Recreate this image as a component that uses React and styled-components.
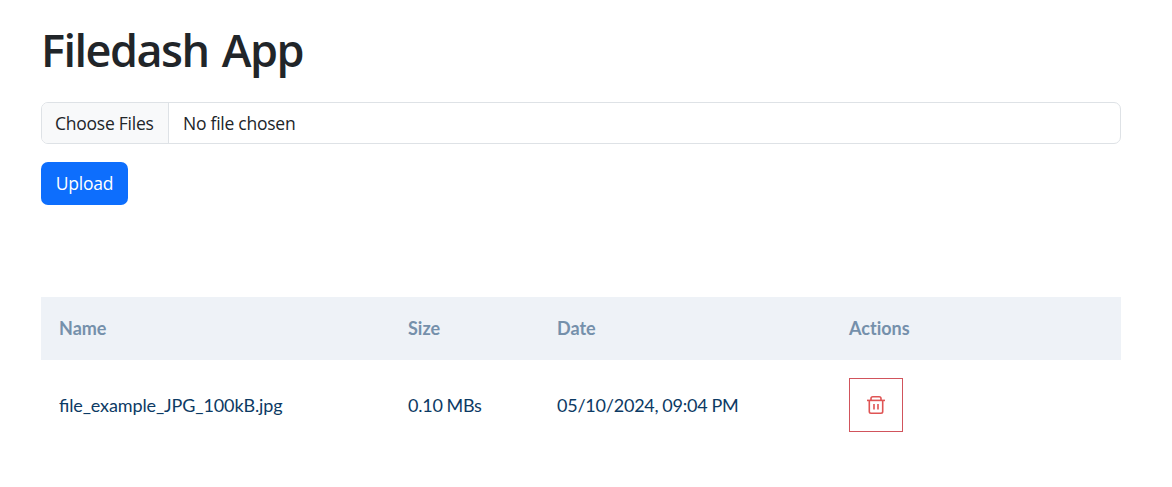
import React from "react";
import styled, { createGlobalStyle } from "styled-components";

const GlobalStyle = createGlobalStyle`
  *, *::before, *::after { box-sizing: border-box; }
  body {
    margin: 0;
    background: #fff;
    color: #212529;
    font-family: "Segoe UI", "Open Sans", "Noto Sans", sans-serif;
    font-size: 18px;
    line-height: 27px;
  }
`;

const Container = styled.main`
  width: 1080px;
  margin-left: 41px;
  padding-top: 23px;
`;

const Title = styled.h1`
  margin: 0 0 25px;
  font-size: 45px;
  line-height: 54px;
  font-weight: 600;
  letter-spacing: -1.5px;
  word-spacing: 3px;
`;

const FileField = styled.label`
  display: flex;
  height: 42px;
  border: 1px solid #dee2e6;
  border-radius: 7px;
  overflow: hidden;
  font-size: 17.5px;
  line-height: 40px;
`;

const ChooseButton = styled.span`
  width: 127px;
  padding-left: 13px;
  background: #f8f9fa;
  border-right: 1px solid #dee2e6;
  letter-spacing: -0.25px;
  white-space: nowrap;
`;

const FileStatus = styled.span`
  padding-left: 14px;
  letter-spacing: -0.25px;
`;

const UploadButton = styled.button`
  display: block;
  width: 87px;
  height: 43px;
  margin: 18px 0 92px;
  padding: 0;
  border: 0;
  border-radius: 7px;
  background: #0d6efd;
  color: #fff;
  font: inherit;
  font-size: 17.5px;
  letter-spacing: -0.25px;
`;

const Table = styled.table`
  width: 1080px;
  table-layout: fixed;
  border-collapse: collapse;
  font-family: Lato, sans-serif;
  color: #0c3a64;
  text-align: left;
`;

const Column = styled.col`
  width: ${({ $width }) => $width}px;
`;

const HeaderCell = styled.th`
  height: 63px;
  padding: 0 18px;
  background: #eef2f7;
  color: #7590ab;
  font-weight: 700;
  font-variant-ligatures: none;
`;

const Cell = styled.td`
  height: 90px;
  padding: 0 18px;
  font-feature-settings: "liga" 1;
  letter-spacing: ${({ $numeric }) => ($numeric ? "-0.22px" : "-0.12px")};
  word-spacing: -0.5px;
  white-space: nowrap;
`;

const DeleteButton = styled.button`
  display: flex;
  align-items: center;
  justify-content: center;
  width: 54px;
  height: 54px;
  padding: 0;
  border: 1px solid #d1545c;
  background: #fff;
  color: #df5454;
`;

const TrashIcon = () => (
  <svg width="20" height="20" viewBox="0 0 20 20" fill="none" stroke="currentColor" strokeWidth="1.6">
    <path d="M1 5.4h18" />
    <path d="M5 5.2V3.6Q5 1.8 6.8 1.8h6.4Q15 1.8 15 3.6v1.6" />
    <path d="M3.3 5.4v11.2q0 1.7 1.7 1.7h10q1.7 0 1.7-1.7V5.4M8 9v5.5M12 9v5.5" />
  </svg>
);

const files = [{ name: "file_example_JPG_100kB.jpg", size: "0.10 MBs", date: "05/10/2024, 09:04 PM" }];

export default function App() {
  return (
    <>
      <GlobalStyle />
      <Container>
        <Title>Filedash App</Title>
        <FileField>
          <ChooseButton>Choose Files</ChooseButton>
          <FileStatus>No file chosen</FileStatus>
        </FileField>
        <UploadButton>Upload</UploadButton>
        <Table>
          <colgroup>
            <Column $width={349} />
            <Column $width={149} />
            <Column $width={292} />
            <Column $width={290} />
          </colgroup>
          <thead>
            <tr>
              <HeaderCell>Name</HeaderCell>
              <HeaderCell>Size</HeaderCell>
              <HeaderCell>Date</HeaderCell>
              <HeaderCell>Actions</HeaderCell>
            </tr>
          </thead>
          <tbody>
            {files.map((file) => (
              <tr key={file.name}>
                <Cell>{file.name}</Cell>
                <Cell $numeric>{file.size}</Cell>
                <Cell $numeric>{file.date}</Cell>
                <Cell>
                  <DeleteButton aria-label="Delete">
                    <TrashIcon />
                  </DeleteButton>
                </Cell>
              </tr>
            ))}
          </tbody>
        </Table>
      </Container>
    </>
  );
}
